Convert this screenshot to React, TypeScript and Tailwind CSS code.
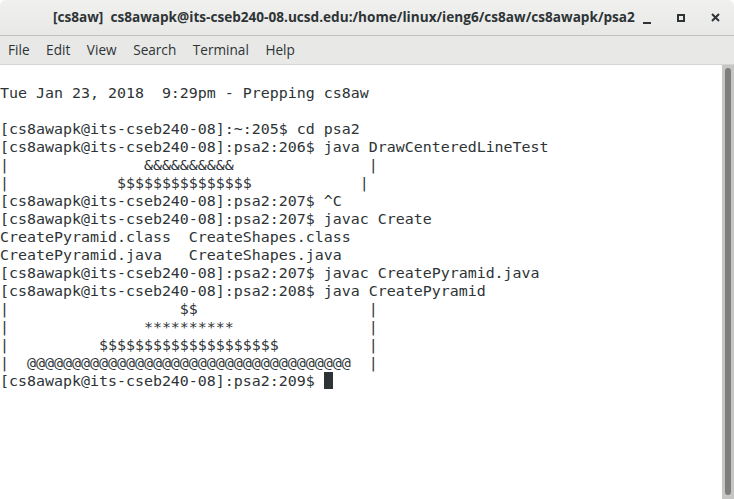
import React from "react";

const lines: string[] = [
  "",
  "Tue Jan 23, 2018  9:29pm - Prepping cs8aw",
  "",
  "[cs8awapk@its-cseb240-08]:~:205$ cd psa2",
  "[cs8awapk@its-cseb240-08]:psa2:206$ java DrawCenteredLineTest",
  "|               &&&&&&&&&&               |",
  "|            $$$$$$$$$$$$$$$            |",
  "[cs8awapk@its-cseb240-08]:psa2:207$ ^C",
  "[cs8awapk@its-cseb240-08]:psa2:207$ javac Create",
  "CreatePyramid.class  CreateShapes.class",
  "CreatePyramid.java   CreateShapes.java",
  "[cs8awapk@its-cseb240-08]:psa2:207$ javac CreatePyramid.java",
  "[cs8awapk@its-cseb240-08]:psa2:208$ java CreatePyramid",
  "|                   $$                   |",
  "|               **********               |",
  "|          $$$$$$$$$$$$$$$$$$$$          |",
  "|  @@@@@@@@@@@@@@@@@@@@@@@@@@@@@@@@@@@@  |",
];

const menu = ["File", "Edit", "View", "Search", "Terminal", "Help"];

export default function App() {
  return (
    <div className="w-[734px] h-[499px] overflow-hidden flex flex-col bg-white">
      {/* TITLE BAR */}
      <div className="relative h-[36px] shrink-0 flex items-center bg-gradient-to-b from-[#f0f0ef] to-[#e8e8e7] border-b border-[#bfbfbd] rounded-t-[6px]">
        <div
          className="pl-[53px] text-[13.6px] font-bold text-[#2e3436] whitespace-pre"
          style={{ fontFamily: '"Open Sans", "Noto Sans", sans-serif' }}
        >
          [cs8aw]  cs8awapk@its-cseb240-08.ucsd.edu:/home/linux/ieng6/cs8aw/cs8awapk/psa2
        </div>
        <div className="ml-auto flex items-center pr-[14px]">
          <div className="w-[8px] h-[2px] bg-[#2e3436] mt-[10px]" />
          <div className="w-[8px] h-[8px] border-2 border-[#2e3436] ml-[26px]" />
          <svg width="9" height="9" viewBox="0 0 9 9" className="ml-[26px]">
            <path d="M1 1 L8 8 M8 1 L1 8" stroke="#2e3436" strokeWidth="2" />
          </svg>
        </div>
      </div>

      {/* MENU BAR */}
      <div
        className="h-[29px] shrink-0 flex items-center bg-[#e8e8e7] border-b border-[#d4d4d2] pl-[8px] gap-[16.6px] text-[13.6px] text-[#2e3436]"
        style={{ fontFamily: '"Open Sans", "Noto Sans", sans-serif' }}
      >
        {menu.map((m) => (
          <span key={m}>{m}</span>
        ))}
      </div>

      {/* TERMINAL */}
      <div className="flex-1 flex min-h-0">
        <pre
          className="flex-1 m-0 pt-[1px] pl-0 text-[14.95px] leading-[18px] text-[#2e3436] whitespace-pre overflow-hidden"
          style={{ fontFamily: '"DejaVu Sans Mono", monospace' }}
        >
          {lines.map((l, i) => (
            <div key={i} className="h-[18px]">
              {l}
            </div>
          ))}
          <div className="h-[18px] flex">
            <span>[cs8awapk@its-cseb240-08]:psa2:209$ </span>
            <span className="inline-block w-[9px] h-[17px] bg-[#2e3436]" />
          </div>
        </pre>
        <div className="w-[12px] shrink-0 bg-[#c6c6c4] pt-[3px] pb-[4px] flex justify-center">
          <div className="w-[6px] h-full rounded-[3px] bg-[#7e7e7c]" />
        </div>
      </div>
    </div>
  );
}
